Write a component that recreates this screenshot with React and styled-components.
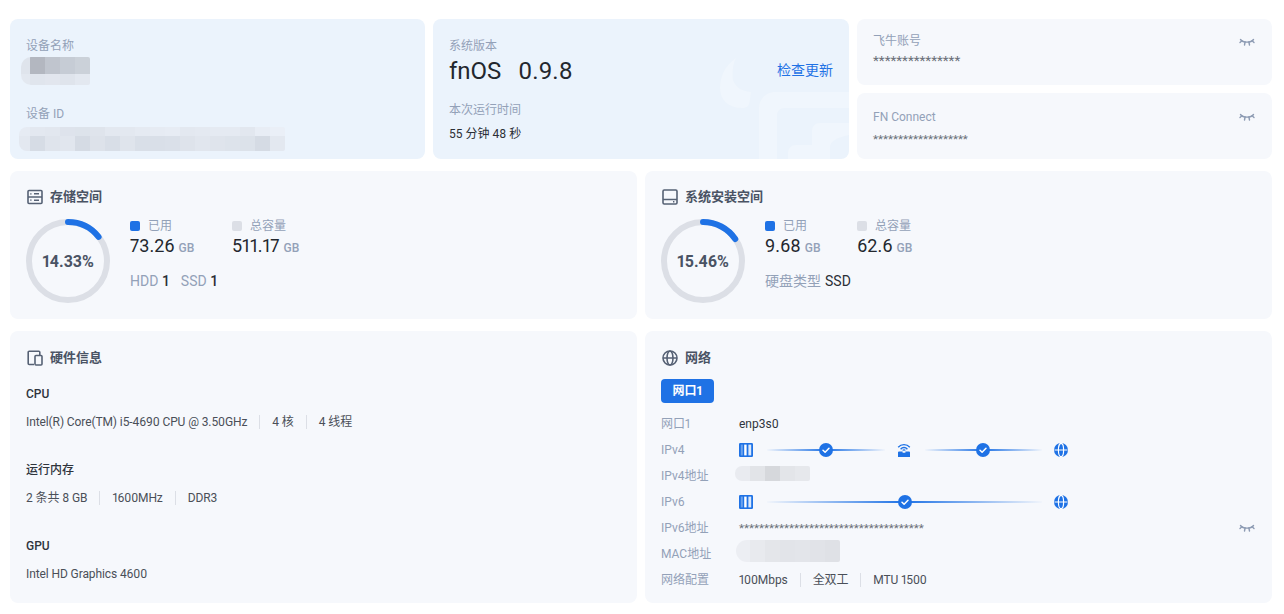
import React from 'react';
import styled, { createGlobalStyle } from 'styled-components';

const BLUE = '#1f72e5';

const GlobalStyle = createGlobalStyle`
  html, body { margin: 0; padding: 0; background: #fff; }
  body {
    font-family: Roboto, "Noto Sans CJK SC", sans-serif;
    font-variant-numeric: proportional-nums;
    color: #2b2f36;
    -webkit-font-smoothing: antialiased;
  }
  * { box-sizing: border-box; }
`;

// --- 布局 ---

const Page = styled.div`
  width: 1284px;
  height: 614px;
  overflow: hidden;
  padding: 19px 12px 0 10px;
  display: flex;
  flex-direction: column;
  gap: 12px;
`;

const TopRow = styled.div`
  display: grid;
  grid-template-columns: 415px 416px 415px;
  grid-template-rows: 140px;
  gap: 8px;
`;

const TwoCols = styled.div`
  display: grid;
  grid-template-columns: 627px 627px;
  grid-template-rows: ${p => p.$h}px;
  gap: 8px;
`;

const Stack = styled.div`
  display: flex;
  flex-direction: column;
  gap: 8px;
  min-height: 0;
  & > * { flex: 0 0 66px; }
`;

const Card = styled.section`
  position: relative;
  overflow: hidden;
  border-radius: 8px;
  background: ${p => (p.$tint ? '#ebf3fc' : '#f6f8fc')};
  padding: ${p => p.$pad || '18px 16px 0'};
  min-height: 0;
`;

const Label = styled.div`
  font-size: 12px;
  line-height: 18px;
  color: #93a1b8;
`;

const DeviceBlock = styled.div`
  height: 68px;
`;

// --- 打码块 ---

const MosaicWrap = styled.div`
  display: flex;
  flex-direction: column;
  width: ${p => p.$w}px;
  margin: ${p => p.$m || 0};
  border-radius: ${p => p.$r || 10}px 2px 2px ${p => p.$r || 10}px;
  overflow: hidden;
`;

const MosaicRow = styled.div`
  display: flex;
  height: ${p => p.$h}px;
`;

const MosaicCell = styled.div`
  flex: 0 0 15px;
  background: ${p => p.$c};
  &:first-child { flex: 1 1 0; }
`;

function Mosaic({ width, margin, rows, radius }) {
  return (
    <MosaicWrap $w={width} $m={margin} $r={radius}>
      {rows.map((r, i) => (
        <MosaicRow key={i} $h={r.h}>
          {r.cells.map((c, j) => <MosaicCell key={j} $c={c} />)}
        </MosaicRow>
      ))}
    </MosaicWrap>
  );
}

// --- 系统版本 ---

const VersionRow = styled.div`
  display: flex;
  align-items: center;
  justify-content: space-between;
  position: relative;
  height: 34px;
  margin-bottom: 12px;
`;

const Version = styled.div`
  display: flex;
  gap: 17px;
  font-size: 24px;
  line-height: 34px;
  margin-bottom: 2px;
  color: #23272e;
`;

const Link = styled.a`
  font-size: 14px;
  color: ${BLUE};
  margin-bottom: 6px;
`;

const Uptime = styled.div`
  font-size: 12px;
  line-height: 18px;
  margin-top: 6px;
  color: #2b2f36;
`;

const Watermark = styled.svg`
  position: absolute;
  right: 0;
  bottom: 0;
  width: 133px;
  height: 104px;
`;

// --- 账号卡片 ---

const AccountHead = styled.div`
  display: flex;
  align-items: center;
  justify-content: space-between;
`;

const Stars = styled.div`
  font-size: ${p => p.$size || 11.6}px;
  line-height: 18px;
  color: #6a6f78;
  margin-top: ${p => p.$mt || 0}px;
`;

const EyeSvg = styled.svg`
  width: 16px;
  height: 10px;
  display: block;
  margin-top: ${p => p.$mt || 0}px;
  margin-right: 1px;
`;

function ClosedEye({ offset }) {
  return (
    <EyeSvg $mt={offset} viewBox="0 0 16 10" fill="none" stroke="#8d9bb3" strokeWidth="1.4" strokeLinecap="round">
      <path d="M1.5 2.5C4 6 12 6 14.5 2.5" />
      <path d="M1 5.5l1.9-1.7M15 5.5l-1.9-1.7M5.5 8l.6-3M10.5 8l-.6-3" />
    </EyeSvg>
  );
}

// --- 标题 ---

const Title = styled.h3`
  display: flex;
  align-items: center;
  gap: 7px;
  margin: 0;
  height: 18px;
  padding-left: 1px;
  font-size: 13px;
  line-height: 18px;
  font-weight: 700;
  color: #4a5364;
`;

const TitleIcon = styled.svg`
  width: 16px;
  height: 16px;
  flex: none;
`;

function StorageIcon() {
  return (
    <TitleIcon viewBox="0 0 16 16" fill="none" stroke="#566174" strokeWidth="1.6">
      <rect x="1" y="1.5" width="14" height="13" rx="1" />
      <path d="M1 8h14M7 4.8h5M7 11.2h5" />
      <path d="M3.4 4.8h1M3.4 11.2h1" strokeWidth="1.8" />
    </TitleIcon>
  );
}

function DiskIcon() {
  return (
    <TitleIcon viewBox="0 0 16 16" fill="none" stroke="#566174" strokeWidth="1.6">
      <rect x="1" y="1" width="14" height="14" rx="1.2" />
      <path d="M1 10.5h14M11 12.8h1.4" />
    </TitleIcon>
  );
}

function DeviceIcon() {
  return (
    <TitleIcon viewBox="0 0 16 16" fill="none" stroke="#566174" strokeWidth="1.6">
      <path d="M7 14.5H2.2A1 1 0 0 1 1.2 13.5V2.2A1 1 0 0 1 2.2 1.2h9.6a1 1 0 0 1 1 1V5" />
      <rect x="8" y="5.5" width="7" height="9.5" rx="1" />
    </TitleIcon>
  );
}

function GlobeIcon() {
  return (
    <TitleIcon viewBox="0 0 16 16" fill="none" stroke="#566174" strokeWidth="1.6">
      <circle cx="8" cy="8" r="7" />
      <ellipse cx="8" cy="8" rx="3" ry="7" />
      <path d="M1 8h14" />
    </TitleIcon>
  );
}

// --- 存储 ---

const StorageBody = styled.div`
  display: flex;
  gap: 20px;
  margin-top: 13px;
`;

const DonutBox = styled.div`
  position: relative;
  width: 84px;
  height: 84px;
  flex: none;
`;

const DonutText = styled.div`
  position: absolute;
  inset: 0;
  display: flex;
  align-items: center;
  justify-content: center;
  padding-top: 1px;
  font-size: 16px;
  font-weight: 700;
  color: #4a5364;
`;

function Donut({ value }) {
  const r = 39;
  const c = 2 * Math.PI * r;
  return (
    <DonutBox>
      <svg width="84" height="84" viewBox="0 0 84 84" fill="none" strokeWidth="6">
        <circle cx="42" cy="42" r={r} stroke="#dcdfe6" />
        <circle
          cx="42"
          cy="42"
          r={r}
          stroke={BLUE}
          strokeLinecap="round"
          strokeDasharray={`${(c * value) / 100} ${c}`}
          transform="rotate(-90 42 42)"
        />
      </svg>
      <DonutText>{value.toFixed(2)}%</DonutText>
    </DonutBox>
  );
}

const StatsRow = styled.div`
  display: flex;
  height: 38px;
`;

const Stat = styled.div`
  width: ${p => p.$w}px;
`;

const Legend = styled.div`
  display: flex;
  align-items: center;
  gap: 8px;
  font-size: 12px;
  line-height: 14px;
  color: #93a1b8;
`;

const Dot = styled.i`
  width: 10px;
  height: 10px;
  border-radius: 2px;
  background: ${p => (p.$used ? BLUE : '#dcdfe6')};
`;

const Amount = styled.div`
  font-size: 18px;
  line-height: 26px;
  color: #23272e;
`;

const Unit = styled.span`
  font-size: 12px;
  font-weight: 500;
  color: #93a1b8;
  margin-left: 4px;
`;

const DiskMeta = styled.div`
  display: flex;
  gap: 12px;
  margin-top: 15px;
  font-size: 14px;
  line-height: 18px;
  color: #93a1b8;
`;

const Strong = styled.span`
  color: #2b2f36;
  margin-left: 4px;
  font-weight: ${p => p.$w || 500};
`;

// --- 硬件 ---

const HardwareGroup = styled.div`
  height: 76px;
`;

const HardwareList = styled.div`
  margin-top: 18px;
`;

const HardwareName = styled.div`
  font-size: 12px;
  line-height: 18px;
  font-weight: 500;
  color: #2f343c;
`;

const Specs = styled.div`
  display: flex;
  align-items: center;
  margin-top: ${p => p.$mt || 0}px;
  font-size: 12px;
  line-height: 18px;
  letter-spacing: -0.1px;
  color: #4a4f58;
`;

const Spec = styled.span`
  display: flex;
  align-items: center;
  & + &::before {
    content: '';
    width: 1px;
    height: 14px;
    margin: 0 12px;
    background: #dcdfe6;
  }
`;

// --- 网络 ---

const Tab = styled.div`
  width: 53px;
  height: 24px;
  margin-top: 12px;
  border-radius: 4px;
  background: ${BLUE};
  color: #fff;
  font-size: 12px;
  font-weight: 700;
  line-height: 24px;
  text-align: center;
`;

const NetList = styled.div`
  margin-top: 8px;
`;

const NetRow = styled.div`
  display: grid;
  grid-template-columns: 78px 1fr auto;
  align-items: center;
  height: 26px;
`;

const Rail = styled.div`
  display: flex;
  align-items: center;
  width: 329px;
`;

const Line = styled.div`
  position: relative;
  flex: 1;
  height: 2px;
  margin: 0 12px 0 14px;
  background: linear-gradient(90deg, rgba(31,114,229,0.02), ${BLUE} 50%, rgba(31,114,229,0.02));
`;

const CheckSvg = styled.svg`
  position: absolute;
  left: 50%;
  top: 50%;
  width: 14px;
  height: 14px;
  transform: translate(-50%, -50%);
`;

const RailIcon = styled.svg`
  width: 14px;
  height: 14px;
  flex: none;
`;

function Check() {
  return (
    <CheckSvg viewBox="0 0 14 14">
      <circle cx="7" cy="7" r="7" fill={BLUE} />
      <path d="M4 7.2l2.1 2L10 5.2" fill="none" stroke="#fff" strokeWidth="1.5" strokeLinecap="round" strokeLinejoin="round" />
    </CheckSvg>
  );
}

function PortIcon() {
  return (
    <RailIcon viewBox="0 0 14 14">
      <rect width="14" height="14" rx="1.2" fill={BLUE} />
      <rect x="1.8" y="1.6" width="2" height="10.8" fill="#6ba3ee" />
      <rect x="5.2" y="1.6" width="2.4" height="10.8" fill="#fff" />
      <rect x="9.4" y="1.6" width="2.8" height="10.8" fill="#dbe9fc" />
    </RailIcon>
  );
}

function RouterIcon() {
  return (
    <RailIcon viewBox="0 0 14 14" fill="none">
      <path d="M1.2 4.2C4.3.8 9.7.8 12.8 4.2M3.6 6.2C5.5 4 8.5 4 10.4 6.2" stroke={BLUE} strokeWidth="1.4" />
      <path d="M5.6 7.4C6.4 6.6 7.6 6.6 8.4 7.4" stroke={BLUE} strokeWidth="1.2" />
      <path d="M1 9.5a1 1 0 0 1 1-1h3.6v1.2h2.8V8.5H12a1 1 0 0 1 1 1V14H1Z" fill={BLUE} />
    </RailIcon>
  );
}

function WorldIcon() {
  return (
    <RailIcon viewBox="0 0 14 14">
      <circle cx="7" cy="7" r="7" fill={BLUE} />
      <ellipse cx="7" cy="7" rx="2.6" ry="6.6" fill="none" stroke="#fff" strokeWidth="1.2" />
      <path d="M.5 7h13" stroke="#fff" strokeWidth="1.2" />
    </RailIcon>
  );
}

const Plain = styled.span`
  font-size: 12px;
  line-height: 18px;
  color: #2f343c;
`;

function NetLine({ label, children, extra }) {
  return (
    <NetRow>
      <Label>{label}</Label>
      {children}
      {extra || <span />}
    </NetRow>
  );
}

function App() {
  return (
    <>
      <GlobalStyle />
      <Page>
        <TopRow>
          <Card $tint>
            <DeviceBlock>
              <Label>设备名称</Label>
              <Mosaic
                width={69}
                margin="2px 0 0 -5px"
                rows={[
                  { h: 17, cells: ['#dfe4ec', '#b3b7c0', '#c0c5ce', '#c6ccd5', '#cbd1d9'] },
                  { h: 11, cells: ['#e3e8f0', '#e0e5ed', '#e2e6ee', '#dfe4ec', '#e3e8f0'] },
                ]}
              />
            </DeviceBlock>
            <Label>设备 ID</Label>
            <Mosaic
              width={266}
              margin="4px 0 0 -7px"
              radius={8}
              rows={[
                { h: 9, cells: ['#e6ebf3', '#e3e8f0', '#e2e7ef', '#dee3ec', '#dde3eb', '#dfe4ec', '#e3e8f0', '#e3e8f0', '#e5eaf2', '#e6ebf3', '#e7ecf4', '#e3e8f0', '#e4e9f1', '#e5eaf2', '#e5eaf2', '#e2e7ef', '#e8edf5', '#eaeff7'] },
                { h: 15, cells: ['#e3e8f0', '#d6dce5', '#dfe4ec', '#e1e6ee', '#d5dbe4', '#dde2ea', '#d8dee7', '#dfe4ec', '#d9dfe8', '#d9dfe8', '#dae0e9', '#dee3eb', '#e1e6ee', '#dfe4ec', '#dde3eb', '#dce2ea', '#d5dbe4', '#e3e8f0'] },
              ]}
            />
          </Card>

          <Card $tint>
            <Watermark viewBox="716 55 133 104" fill="#fff" fillOpacity="0.25">
              <path d="M736 58C724 66 720 78 720 88C720 100 728 108 742 108C748 108 749 106 750 100L751 92C742 91 736 88 733 80C732 72 733 64 736 58Z" />
              <path d="M849 92H775C766 92 759 99 759 108V159H777V116C777 111 780 108 785 108H849Z" />
              <path d="M788 159V153C788 148 791 145 796 145H812V131C812 126 815 123 820 123H849V135C835 138 830 142 830 148V159Z" />
            </Watermark>
            <Label>系统版本</Label>
            <VersionRow>
              <Version><span>fnOS</span><span>0.9.8</span></Version>
              <Link>检查更新</Link>
            </VersionRow>
            <Label>本次运行时间</Label>
            <Uptime>55 分钟 48 秒</Uptime>
          </Card>

          <Stack>
            <Card $pad="13px 16px 0">
              <AccountHead>
                <Label>飞牛账号</Label>
                <ClosedEye offset={2} />
              </AccountHead>
              <Stars $size={13.5} $mt={1}>***************</Stars>
            </Card>
            <Card $pad="15px 16px 0">
              <AccountHead>
                <Label>FN Connect</Label>
                <ClosedEye />
              </AccountHead>
              <Stars $mt={4}>*******************</Stars>
            </Card>
          </Stack>
        </TopRow>

        <TwoCols $h={148}>
          <Card $pad="17px 16px 0">
            <Title><StorageIcon />存储空间</Title>
            <StorageBody>
              <Donut value={14.33} />
              <div>
                <StatsRow>
                  <Stat $w={102}>
                    <Legend><Dot $used />已用</Legend>
                    <Amount>73.26<Unit>GB</Unit></Amount>
                  </Stat>
                  <Stat $w={110}>
                    <Legend><Dot />总容量</Legend>
                    <Amount>511.17<Unit>GB</Unit></Amount>
                  </Stat>
                </StatsRow>
                <DiskMeta>
                  <span>HDD<Strong>1</Strong></span>
                  <span>SSD<Strong>1</Strong></span>
                </DiskMeta>
              </div>
            </StorageBody>
          </Card>
          <Card $pad="17px 16px 0">
            <Title><DiskIcon />系统安装空间</Title>
            <StorageBody>
              <Donut value={15.46} />
              <div>
                <StatsRow>
                  <Stat $w={92}>
                    <Legend><Dot $used />已用</Legend>
                    <Amount>9.68<Unit>GB</Unit></Amount>
                  </Stat>
                  <Stat $w={100}>
                    <Legend><Dot />总容量</Legend>
                    <Amount>62.6<Unit>GB</Unit></Amount>
                  </Stat>
                </StatsRow>
                <DiskMeta>
                  <span>硬盘类型<Strong $w={400}>SSD</Strong></span>
                </DiskMeta>
              </div>
            </StorageBody>
          </Card>
        </TwoCols>

        <TwoCols $h={272}>
          <Card>
            <Title><DeviceIcon />硬件信息</Title>
            <HardwareList>
              <HardwareGroup>
                <HardwareName>CPU</HardwareName>
                <Specs $mt={10}>
                  <Spec>Intel(R) Core(TM) i5-4690 CPU @ 3.50GHz</Spec>
                  <Spec>4 核</Spec>
                  <Spec>4 线程</Spec>
                </Specs>
              </HardwareGroup>
              <HardwareGroup>
                <HardwareName>运行内存</HardwareName>
                <Specs $mt={10}>
                  <Spec>2 条共 8 GB</Spec>
                  <Spec>1600MHz</Spec>
                  <Spec>DDR3</Spec>
                </Specs>
              </HardwareGroup>
              <HardwareGroup>
                <HardwareName>GPU</HardwareName>
                <Specs $mt={10}>
                  <Spec>Intel HD Graphics 4600</Spec>
                </Specs>
              </HardwareGroup>
            </HardwareList>
          </Card>

          <Card>
            <Title><GlobeIcon />网络</Title>
            <Tab>网口1</Tab>
            <NetList>
              <NetLine label="网口1"><Plain>enp3s0</Plain></NetLine>
              <NetLine label="IPv4">
                <Rail>
                  <PortIcon />
                  <Line><Check /></Line>
                  <RouterIcon />
                  <Line><Check /></Line>
                  <WorldIcon />
                </Rail>
              </NetLine>
              <NetLine label="IPv4地址">
                <Mosaic
                  width={75}
                  margin="-6px 0 0 -4px"
                  radius={7}
                  rows={[
                    { h: 15, cells: ['#e9ebf0', '#e2e4e8', '#d6d8dc', '#e3e5e9', '#e6e8ec'] },
                  ]}
                />
              </NetLine>
              <NetLine label="IPv6">
                <Rail>
                  <PortIcon />
                  <Line><Check /></Line>
                  <WorldIcon />
                </Rail>
              </NetLine>
              <NetLine label="IPv6地址" extra={<ClosedEye />}>
                <Stars>*************************************</Stars>
              </NetLine>
              <NetLine label="MAC地址">
                <Mosaic
                  width={104}
                  margin="-6px 0 0 -3px"
                  radius={11}
                  rows={[
                    { h: 22, cells: ['#eceef3', '#e8eaee', '#e4e6ea', '#e2e4e9', '#e3e5ea', '#e1e3e8', '#dfe1e6'] },
                  ]}
                />
              </NetLine>
              <NetLine label="网络配置">
                <Specs>
                  <Spec>100Mbps</Spec>
                  <Spec>全双工</Spec>
                  <Spec>MTU 1500</Spec>
                </Specs>
              </NetLine>
            </NetList>
          </Card>
        </TwoCols>
      </Page>
    </>
  );
}

export default App;
